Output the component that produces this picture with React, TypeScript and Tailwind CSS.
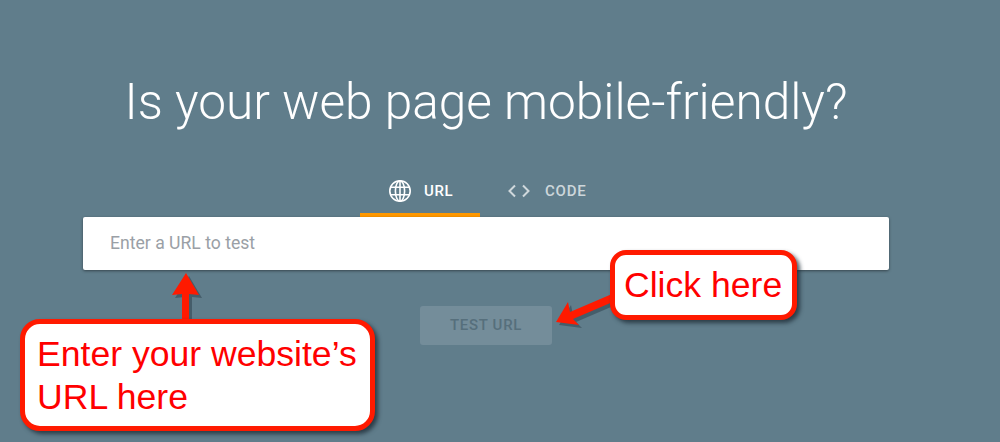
export default function App() {
  return (
    <div className="relative w-[1000px] h-[442px] overflow-hidden bg-[#607d8b] font-['Roboto',sans-serif]">
      <div className="flex flex-col items-center w-[806px] ml-[83px] pt-[68px]">
        <h1 className="text-[49.6px] leading-[68px] font-light text-white whitespace-nowrap">Is your web page mobile-friendly?</h1>
        <div className="flex self-start ml-[277px] mt-[43px]">
          <div className="w-[120px] h-[38px] flex items-start pl-[28px] gap-[12px] border-b-4 border-[#ff9800] text-white">
            <svg width="24" height="24" viewBox="0 0 24 24" fill="none" stroke="currentColor" strokeWidth="1.6" className="shrink-0">
              <circle cx="12" cy="12" r="10.2" />
              <ellipse cx="12" cy="12" rx="4.6" ry="10.2" />
              <path d="M12 2v20M2.6 8.2h18.8M2.6 15.8h18.8" />
            </svg>
            <span className="text-[15px] leading-[24px] font-medium tracking-[0.6px]">URL</span>
          </div>
          <div className="w-[120px] h-[38px] flex items-start pl-[27px] gap-[14px] text-white/70">
            <svg width="24" height="24" viewBox="0 0 24 24" fill="none" stroke="currentColor" strokeWidth="2" className="shrink-0">
              <path d="M8 6.5 2.5 12 8 17.5M16 6.5l5.5 5.5-5.5 5.5" />
            </svg>
            <span className="text-[15px] leading-[24px] font-medium tracking-[0.8px]">CODE</span>
          </div>
        </div>
        <div className="w-full h-[53px] bg-white rounded-[2px] shadow-[0_1px_3px_rgba(0,0,0,0.45)] flex items-center px-[27px] text-[17.6px] text-[#9aa0a6]">
          Enter a URL to test
        </div>
        <button className="mt-[36px] w-[132px] h-[39px] rounded-[3px] bg-[#748d9a] text-[#566f7c] text-[15px] font-medium tracking-[0.7px]">
          TEST URL
        </button>
      </div>

      <svg className="absolute inset-0 pointer-events-none" width="1000" height="442" viewBox="0 0 1000 442" fill="none">
        <g fill="#2f4450" opacity="0.55" transform="translate(3 3)">
          <path d="M186 273 199 295 189 294 189 320 182 320 182 294 172 295Z" />
          <path d="M556 322 568 302 570 312 612 294 615 301 573 319 579 325Z" />
        </g>
        <path d="M186 273 199 295 189 294 189 320 182 320 182 294 172 295Z" fill="#ff1a00" />
        <path d="M556 322 568 302 570 312 612 294 615 301 573 319 579 325Z" fill="#ff1a00" />
      </svg>

      <div className="absolute left-[20px] top-[319px] w-[355px] h-[112px] bg-white border-[5px] border-[#ff1a00] rounded-[20px] shadow-[3px_3px_4px_rgba(30,45,55,0.8)] pl-[12px] pt-[9px] font-['Liberation_Sans',sans-serif] text-[35.6px] leading-[43px] text-[#ff0000] whitespace-nowrap">
        Enter your website’s<br />URL here
      </div>
      <div className="absolute left-[610px] top-[250px] w-[187px] h-[70px] bg-white border-[5px] border-[#ff1a00] rounded-[16px] shadow-[3px_3px_4px_rgba(30,45,55,0.8)] pl-[9px] pt-[9px] font-['Liberation_Sans',sans-serif] text-[35.6px] leading-[43px] text-[#ff0000] whitespace-nowrap">
        Click here
      </div>
    </div>
  );
}
